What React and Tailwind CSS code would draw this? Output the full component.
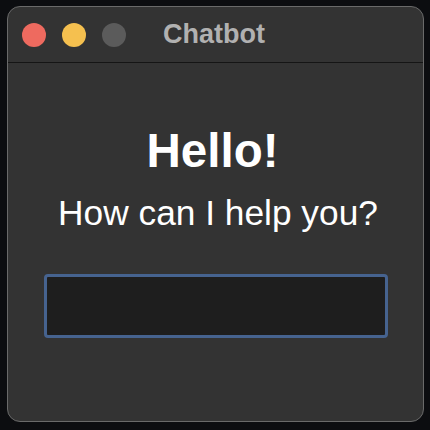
export default function App() {
  return (
    <div
      className="w-[430px] h-[430px] bg-[#0c0d10] pl-[7px] pt-[6px]"
      style={{ fontFamily: '"Liberation Sans", Arial, sans-serif' }}
    >
      <div className="w-[417px] h-[416px] rounded-[13px] border border-[#6a6a6a] bg-[#333333] overflow-hidden flex flex-col">
        {/* Title bar */}
        <div className="h-[56px] border-b border-[#151515] flex items-center pl-[14px] shrink-0">
          <div className="flex gap-[16px]">
            <span className="w-[24px] h-[24px] rounded-full bg-[#ee6a5f]" />
            <span className="w-[24px] h-[24px] rounded-full bg-[#f5c04f]" />
            <span className="w-[24px] h-[24px] rounded-full bg-[#5b5b5b]" />
          </div>
          <span className="ml-[37px] text-[27px] font-bold leading-none text-[#b1b1b1]">Chatbot</span>
        </div>

        {/* Body */}
        <div className="flex flex-col items-center pt-[64px]">
          <h1 className="text-[47.5px] font-bold leading-none text-white pr-[6px]">Hello!</h1>
          <p className="mt-[20px] text-[35.3px] leading-none text-white pl-[5px]">How can I help you?</p>
          <input
            type="text"
            className="mt-[44px] w-[344px] h-[64px] rounded-[4px] border-[3px] border-[#46638f] bg-[#1e1e1e] outline-none text-white px-2"
          />
        </div>
      </div>
    </div>
  );
}
